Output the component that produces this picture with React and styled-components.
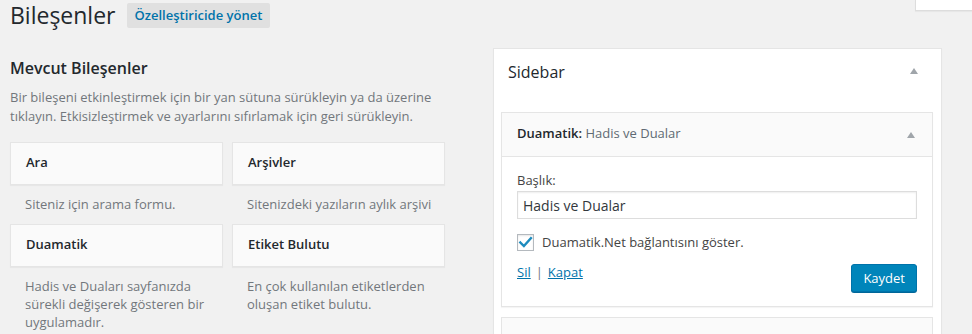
import styled, { createGlobalStyle } from 'styled-components'

const Global = createGlobalStyle`
html, body {
  margin:0;
  padding:0;
  background:#f1f1f1;
  overflow:hidden;
}
body {
  font-family:"Open Sans", "Liberation Sans", sans-serif;
  font-size:13px;
  color:#23282d;
}
`

const available = [
  {title: 'Ara', desc: 'Siteniz için arama formu.'},
  {title: 'Arşivler', desc: 'Sitenizdeki yazıların aylık arşivi'},
  {title: 'Duamatik', desc: 'Hadis ve Duaları sayfanızda sürekli değişerek gösteren bir uygulamadır.'},
  {title: 'Etiket Bulutu', desc: 'En çok kullanılan etiketlerden oluşan etiket bulutu.'},
]

function Check() {
  return (
    <svg width="16" height="16" viewBox="0 0 16 16">
      <path d="M2.5 7.5 L6.3 11.3 L13.8 2.8" fill="none" stroke="#1e8cbe" strokeWidth="2.6" strokeLinecap="square" />
    </svg>
  )
}

export default function App() {
  return (
    <Page>
      <Global />
      <ScreenTab><span>Ekran Seçenekleri</span></ScreenTab>
      <Header>
        <Title>Bileşenler</Title>
        <ManageBtn>Özelleştiricide yönet</ManageBtn>
      </Header>
      <Columns>
        <Left>
          <SectionTitle>Mevcut Bileşenler</SectionTitle>
          <Intro>Bir bileşeni etkinleştirmek için bir yan sütuna sürükleyin ya da üzerine tıklayın. Etkisizleştirmek ve ayarlarını sıfırlamak için geri sürükleyin.</Intro>
          <WidgetGrid>
            {available.map(w => (
              <div key={w.title}>
                <WidgetCard>{w.title}</WidgetCard>
                <WidgetDesc>{w.desc}</WidgetDesc>
              </div>
            ))}
          </WidgetGrid>
        </Left>
        <Right>
          <SidebarBox>
            <SidebarHead>
              <SidebarName>Sidebar</SidebarName>
              <Arrow />
            </SidebarHead>
            <Widget>
              <WidgetTop>
                <WidgetTitle>Duamatik: <span>Hadis ve Dualar</span></WidgetTitle>
                <Arrow $small />
              </WidgetTop>
              <WidgetBody>
                <Label>Başlık:</Label>
                <TextInput defaultValue="Hadis ve Dualar" />
                <CheckRow>
                  <CheckBox><Check /></CheckBox>
                  <span>Duamatik.Net bağlantısını göster.</span>
                </CheckRow>
                <Actions>
                  <Links><a>Sil</a><Sep>|</Sep><a>Kapat</a></Links>
                  <SaveBtn>Kaydet</SaveBtn>
                </Actions>
              </WidgetBody>
            </Widget>
            <NextWidget />
          </SidebarBox>
        </Right>
      </Columns>
    </Page>
  )
}

const Page = styled.div`
position:relative;
padding-left:10px;
`

const ScreenTab = styled.div`
position:absolute;
top:0;
right:0;
box-sizing:border-box;
width:57px;
height:11px;
overflow:hidden;
background:#fff;
border:1px solid #ddd;
border-top:none;
border-right:none;
box-shadow:0 1px 1px rgba(0,0,0,.04);
padding-left:17px;
color:#72777c;
white-space:nowrap;
span {
  display:block;
  line-height:20px;
  margin-top:-15px;
}
`

const Header = styled.div`
display:flex;
align-items:flex-start;
`

const Title = styled.h1`
margin:0;
font-size:23px;
font-weight:400;
line-height:30px;
color:#23282d;
`

const ManageBtn = styled.span`
margin:3px 0 0 11px;
height:25px;
line-height:25px;
padding:0 8px;
background:#e0e0e0;
border-radius:2px;
color:#0073aa;
font-weight:600;
font-size:13px;
`

const Columns = styled.div`
display:flex;
gap:47px;
align-items:flex-start;
`

const Left = styled.div`
width:436px;
`

const SectionTitle = styled.h2`
margin:27px 0 0;
font-size:16px;
line-height:23px;
font-weight:600;
`

const Intro = styled.p`
margin:8px 0 0;
line-height:19px;
color:#72777c;
`

const WidgetGrid = styled.div`
margin-top:16px;
display:grid;
grid-template-columns:213px 213px;
column-gap:9px;
row-gap:11px;
`

const WidgetCard = styled.div`
box-sizing:border-box;
height:43px;
padding:10px 15px 12px;
line-height:19px;
font-weight:600;
background:#fafafa;
border:1px solid #e5e5e5;
box-shadow:0 1px 1px rgba(0,0,0,.04);
`

const WidgetDesc = styled.div`
padding:10px 4px 0 15px;
line-height:18px;
color:#72777c;
`

const Right = styled.div`
width:449px;
margin-top:18px;
`

const SidebarBox = styled.div`
background:#fff;
border:1px solid #e5e5e5;
box-shadow:0 1px 1px rgba(0,0,0,.04);
padding:0 8px 0 7px;
height:400px;
`

const SidebarHead = styled.div`
display:flex;
justify-content:space-between;
align-items:center;
padding:12px 15px 0 7px;
`

const SidebarName = styled.h2`
margin:0;
font-size:16px;
line-height:23px;
font-weight:400;
`

const Arrow = styled.span`
width:0;
height:0;
border-left:4px solid transparent;
border-right:4px solid transparent;
border-bottom:6px solid #a0a5aa;
margin-bottom:${p => (p.$small ? '-3px' : '3px')};
margin-right:${p => (p.$small ? '2px' : '0')};
`

const Widget = styled.div`
margin-top:28px;
border:1px solid #e5e5e5;
box-shadow:0 1px 1px rgba(0,0,0,.04);
`

const WidgetTop = styled.div`
display:flex;
justify-content:space-between;
align-items:center;
background:#fafafa;
padding:11px 15px 13px;
line-height:19px;
border-bottom:1px solid #e5e5e5;
`

const WidgetTitle = styled.div`
font-weight:600;
span {
  font-weight:400;
  color:#606a73;
}
`

const WidgetBody = styled.div`
background:#fff;
padding:14px 15px 14px;
`

const Label = styled.div`
line-height:19px;
color:#444;
`

const TextInput = styled.input`
display:block;
box-sizing:border-box;
width:100%;
height:28px;
margin-top:1px;
padding:3px 5px;
border:1px solid #ddd;
box-shadow:inset 0 1px 2px rgba(0,0,0,.07);
font-family:inherit;
font-size:14px;
color:#32373c;
outline:none;
`

const CheckRow = styled.div`
margin-top:14px;
display:flex;
align-items:center;
gap:8px;
line-height:19px;
color:#444;
`

const CheckBox = styled.span`
box-sizing:border-box;
width:17px;
height:17px;
border:1px solid #b4b9be;
background:#fff;
box-shadow:inset 0 1px 2px rgba(0,0,0,.1);
display:flex;
align-items:center;
justify-content:center;
`

const Actions = styled.div`
margin-top:12px;
display:flex;
justify-content:space-between;
align-items:flex-start;
`

const Links = styled.div`
margin-top:-1px;
line-height:19px;
a {
  color:#0073aa;
  text-decoration:underline;
  cursor:pointer;
}
`

const Sep = styled.span`
margin:0 5px;
color:#72777c;
`

const SaveBtn = styled.button`
height:28px;
padding:0 11px;
line-height:26px;
background:#0085ba;
border:1px solid #0073aa;
border-radius:3px;
box-shadow:0 1px 0 #006799;
color:#fff;
font-family:inherit;
font-size:13px;
`

const NextWidget = styled.div`
margin-top:10px;
height:44px;
background:#fafafa;
border:1px solid #e5e5e5;
`
